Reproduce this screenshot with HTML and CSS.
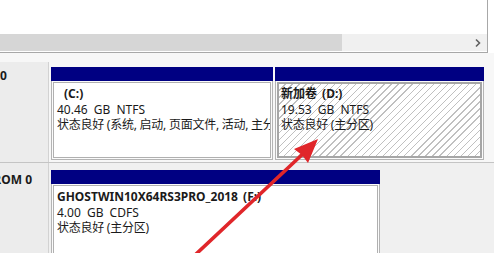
FILE: index.html
```html
<!DOCTYPE html>
<html lang="zh-CN">
<head>
<meta charset="utf-8">
<title>磁盘管理</title>
<link rel="stylesheet" href="styles.css">
</head>
<body>
<div class="screen">
  <div class="listview">
    <div class="list-body"></div>
    <div class="hscroll">
      <div class="thumb"></div>
      <div class="track"></div>
      <svg class="chev" width="8" height="10" viewBox="0 0 8 10"><path d="M2 1.5 L5.5 5 L2 8.5" fill="none" stroke="#606060" stroke-width="1.6"/></svg>
    </div>
  </div>
  <div class="graph">
    <div class="strip"></div>
    <div class="disk disk0">
      <div class="label"><span>磁盘 0</span></div>
      <div class="parts">
        <div class="part part-c">
          <div class="bar"></div>
          <div class="box">
            <div class="name c-name">(C:)</div>
            <div class="line size">40.46 GB NTFS</div>
            <div class="line status">状态良好 (系统, 启动, 页面文件, 活动, 主分区)</div>
          </div>
        </div>
        <div class="part part-d">
          <div class="bar"></div>
          <div class="box hatched">
            <div class="name">新加卷 (D:)</div>
            <div class="line size">19.53 GB NTFS</div>
            <div class="line status">状态良好 (主分区)</div>
          </div>
        </div>
      </div>
    </div>
    <div class="disk cdrom">
      <div class="label"><span>CD-ROM 0</span></div>
      <div class="parts">
        <div class="part part-f">
          <div class="bar"></div>
          <div class="box">
            <div class="name">GHOSTWIN10X64RS3PRO_2018 (F:)</div>
            <div class="line size">4.00 GB CDFS</div>
            <div class="line status">状态良好 (主分区)</div>
          </div>
        </div>
      </div>
    </div>
  </div>
  <svg class="annot" width="494" height="253" viewBox="0 0 494 253">
    <line x1="194" y1="256" x2="306" y2="151" stroke="#e0262a" stroke-width="3.6" stroke-linecap="round"/>
    <polygon points="318,139 294,149 302,155 308,163" fill="#e0262a"/>
  </svg>
</div>
</body>
</html>
```
FILE: styles.css
```css
html, body {
  margin: 0;
  padding: 0;
}
body {
  width: 494px;
  height: 253px;
  overflow: hidden;
  background: #ffffff;
  font-family: "Noto Sans", "Noto Sans CJK SC", sans-serif;
  font-size: 12px;
  color: #1a1a1a;
}
.screen {
  position: relative;
  width: 494px;
  height: 253px;
  overflow: hidden;
}
.listview {
  width: 487px;
  height: 52px;
  border-right: 1px solid #a8a8a8;
  border-bottom: 1px solid #a8a8a8;
  background: #ffffff;
  display: flex;
  flex-direction: column;
}
.list-body {
  height: 34px;
}
.hscroll {
  height: 17px;
  display: flex;
  align-items: center;
  background: #f0f0f0;
}
.thumb {
  width: 342px;
  height: 17px;
  background: #d6d6d6;
}
.track {
  flex: 1;
}
.chev {
  margin-right: 5px;
}
.graph {
  background: #f0f0f0;
  height: 200px;
}
.strip {
  height: 9px;
  background: #f7f7f7;
}
.disk {
  display: flex;
}
.disk0 {
  height: 100px;
  border-bottom: 1px solid #c4c4c4;
}
.cdrom {
  height: 100px;
}
.label {
  width: 48px;
  border-right: 1px solid #d2d2d2;
  background: #ececec;
  overflow: hidden;
  white-space: nowrap;
  font-weight: bold;
  line-height: 16px;
}
.label span {
  display: block;
  margin-left: -27px;
}
.disk0 .label span {
  padding-top: 6px;
}
.cdrom .label span {
  padding-top: 9px;
}
.parts {
  flex: 1;
  display: flex;
  gap: 2px;
  padding-left: 2px;
  background: #f7f7f7;
}
.disk0 .parts {
  padding-top: 5px;
}
.cdrom .parts {
  padding-top: 7px;
  background: #f0f0f0;
}
.part {
  display: flex;
  flex-direction: column;
  border: 1px solid #b4b4b4;
  border-top: none;
  background: #fbfbfb;
}
.part-c {
  width: 220px;
  height: 92px;
}
.part-d {
  width: 207px;
  height: 92px;
}
.part-f {
  width: 327px;
  height: 120px;
}
.bar {
  height: 14px;
  background: #000082;
  margin: 0 -1px;
}
.box {
  flex: 1;
  margin: 1px;
  border: 1px solid #b0b0b0;
  background: #ffffff;
  padding: 3px 0 0 3px;
  line-height: 15.5px;
  white-space: nowrap;
  overflow: hidden;
}
.hatched {
  border: 2px solid #a6a6a6;
  padding: 2px 0 0 2px;
  background: repeating-linear-gradient(135deg, #ffffff 0px, #ffffff 4px, #c0c0c0 4px, #c0c0c0 5px);
}
.name {
  font-weight: bold;
  word-spacing: 2px;
}
.size {
  word-spacing: 3px;
}
.status {
  letter-spacing: -0.25px;
}
.c-name {
  padding-left: 7px;
}
.annot {
  position: absolute;
  left: 0;
  top: 0;
  pointer-events: none;
}
```
